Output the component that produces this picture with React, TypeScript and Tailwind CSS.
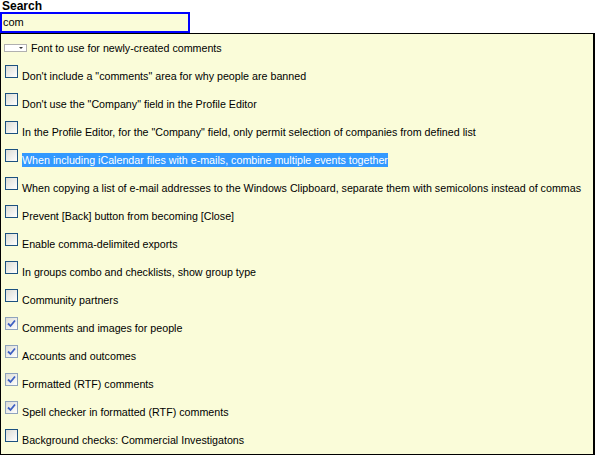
import React from 'react';

type Row = { label: string; checked?: boolean; selected?: boolean };

const rows: Row[] = [
  { label: "Don't include a \"comments\" area for why people are banned" },
  { label: "Don't use the \"Company\" field in the Profile Editor" },
  { label: 'In the Profile Editor, for the "Company" field, only permit selection of companies from defined list' },
  { label: 'When including iCalendar files with e-mails, combine multiple events together', selected: true },
  { label: 'When copying a list of e-mail addresses to the Windows Clipboard, separate them with semicolons instead of commas' },
  { label: 'Prevent [Back] button from becoming [Close]' },
  { label: 'Enable comma-delimited exports' },
  { label: 'In groups combo and checklists, show group type' },
  { label: 'Community partners' },
  { label: 'Comments and images for people', checked: true },
  { label: 'Accounts and outcomes', checked: true },
  { label: 'Formatted (RTF) comments', checked: true },
  { label: 'Spell checker in formatted (RTF) comments', checked: true },
  { label: 'Background checks: Commercial Investigatons' },
];

function Checkbox({ checked }: { checked?: boolean }) {
  if (checked) {
    return (
      <div className="w-[13px] h-[13px] border border-[#8fa3bd] bg-gradient-to-br from-[#dcdcd5] to-white flex items-center justify-center shrink-0">
        <svg width="9" height="9" viewBox="0 0 9 9">
          <path d="M1 4.5 L3.5 7 L8 1.5" stroke="#3d5fc2" strokeWidth="1.8" fill="none" />
        </svg>
      </div>
    );
  }
  return <div className="w-[13px] h-[13px] border border-[#1c5180] bg-gradient-to-br from-[#dcdcd5] to-white shrink-0" />;
}

export default function App() {
  return (
    <div className="w-[595px] h-[455px] bg-white text-[10.7px] text-black overflow-hidden" style={{ fontFamily: '"Liberation Sans", Arial, sans-serif' }}>
      <div className="pl-[2px] h-[12px] leading-[12px] font-bold text-[12px]">Search</div>
      <div className="w-[190px] h-[21px] border-2 border-[#0000ff] bg-[#fafcd9] pl-[1px] leading-[16px] text-[11px]">com</div>
      <div className="border border-black border-r-2 bg-[#fafcd9] h-[422px]">
        <div className="h-[28px] flex items-center">
          <div className="ml-[3px] w-[23px] h-[8px] bg-white border border-[#b0b0b0] flex items-center justify-end pr-[3px]">
            <div className="w-0 h-0 border-l-[2px] border-r-[2px] border-t-[2px] border-l-transparent border-r-transparent border-t-[#333]" />
          </div>
          <span className="ml-[4px] leading-[14px]">Font to use for newly-created comments</span>
        </div>
        {rows.map((r) => (
          <div key={r.label} className="h-[28px] flex items-start">
            <div className="ml-[4px] mt-[3px]">
              <Checkbox checked={r.checked} />
            </div>
            <span className={`ml-[4px] mt-[7px] leading-[14px] whitespace-nowrap ${r.selected ? 'bg-[#3399ff] text-white' : ''}`}>{r.label}</span>
          </div>
        ))}
      </div>
    </div>
  );
}
